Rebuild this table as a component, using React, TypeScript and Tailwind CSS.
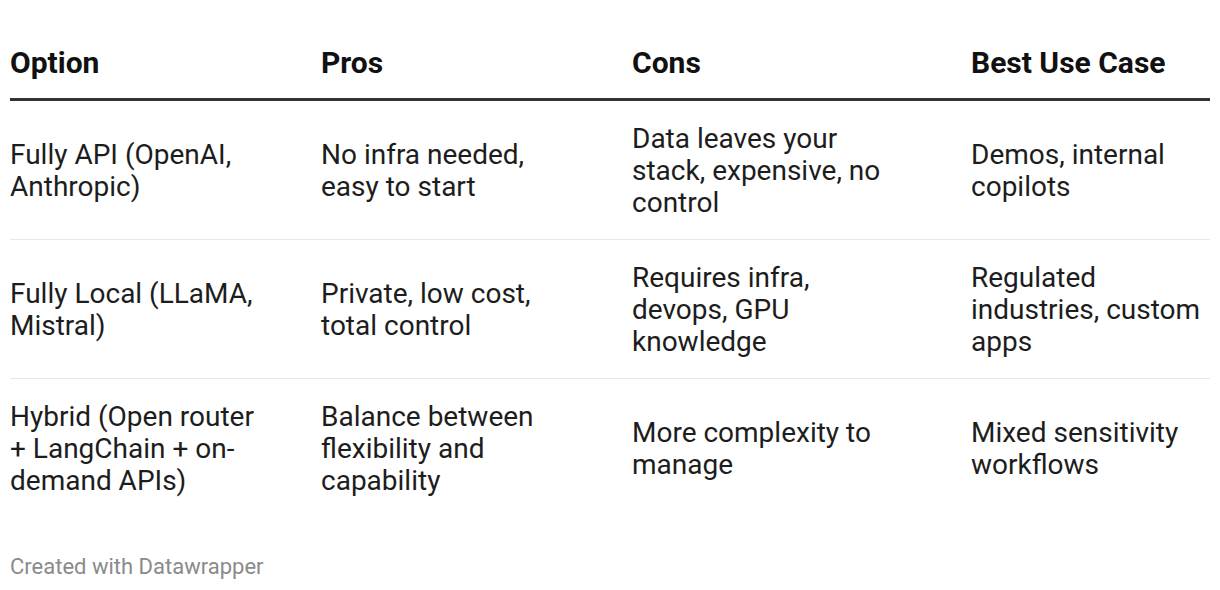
const rows = [
  {
    option: "Fully API (OpenAI, Anthropic)",
    pros: "No infra needed, easy to start",
    cons: "Data leaves your stack, expensive, no control",
    best: "Demos, internal copilots",
  },
  {
    option: "Fully Local (LLaMA, Mistral)",
    pros: "Private, low cost, total control",
    cons: "Requires infra, devops, GPU knowledge",
    best: "Regulated industries, custom apps",
  },
  {
    option: "Hybrid (Open router + LangChain + on-demand APIs)",
    pros: "Balance between flexibility and capability",
    cons: "More complexity to manage",
    best: "Mixed sensitivity workflows",
  },
];

const cols = "grid grid-cols-[311px_311px_339px_1fr]";

export default function App() {
  return (
    <div
      className="h-[590px] w-[1220px] overflow-hidden bg-white px-[10px] text-[#1d1d1d]"
      style={{ fontFamily: "Roboto, 'Noto Sans', sans-serif" }}
    >
      <div className={`${cols} border-b-[3px] border-[#333333] pb-[19px] pt-[47px] text-[30px] font-bold leading-[32px] text-[#111111]`}>
        <div>Option</div>
        <div>Pros</div>
        <div>Cons</div>
        <div>Best Use Case</div>
      </div>

      {rows.map((r, i) => (
        <div
          key={r.option}
          className={`${cols} items-center pt-[22px] text-[28px] leading-[32px] ${i === 0 ? "pb-[20px]" : "pb-[20px]"} ${i < rows.length - 1 ? "border-b border-[#e8e8e8]" : ""}`}
        >
          <div className="pr-[59px]">{r.option}</div>
          <div className="pr-[71px]">{r.pros}</div>
          <div className="pr-[79px]">{r.cons}</div>
          <div>{r.best}</div>
        </div>
      ))}

      <div className="mt-[38px] text-[22px] leading-[24px] text-[#8a8a8a]">Created with Datawrapper</div>
    </div>
  );
}
